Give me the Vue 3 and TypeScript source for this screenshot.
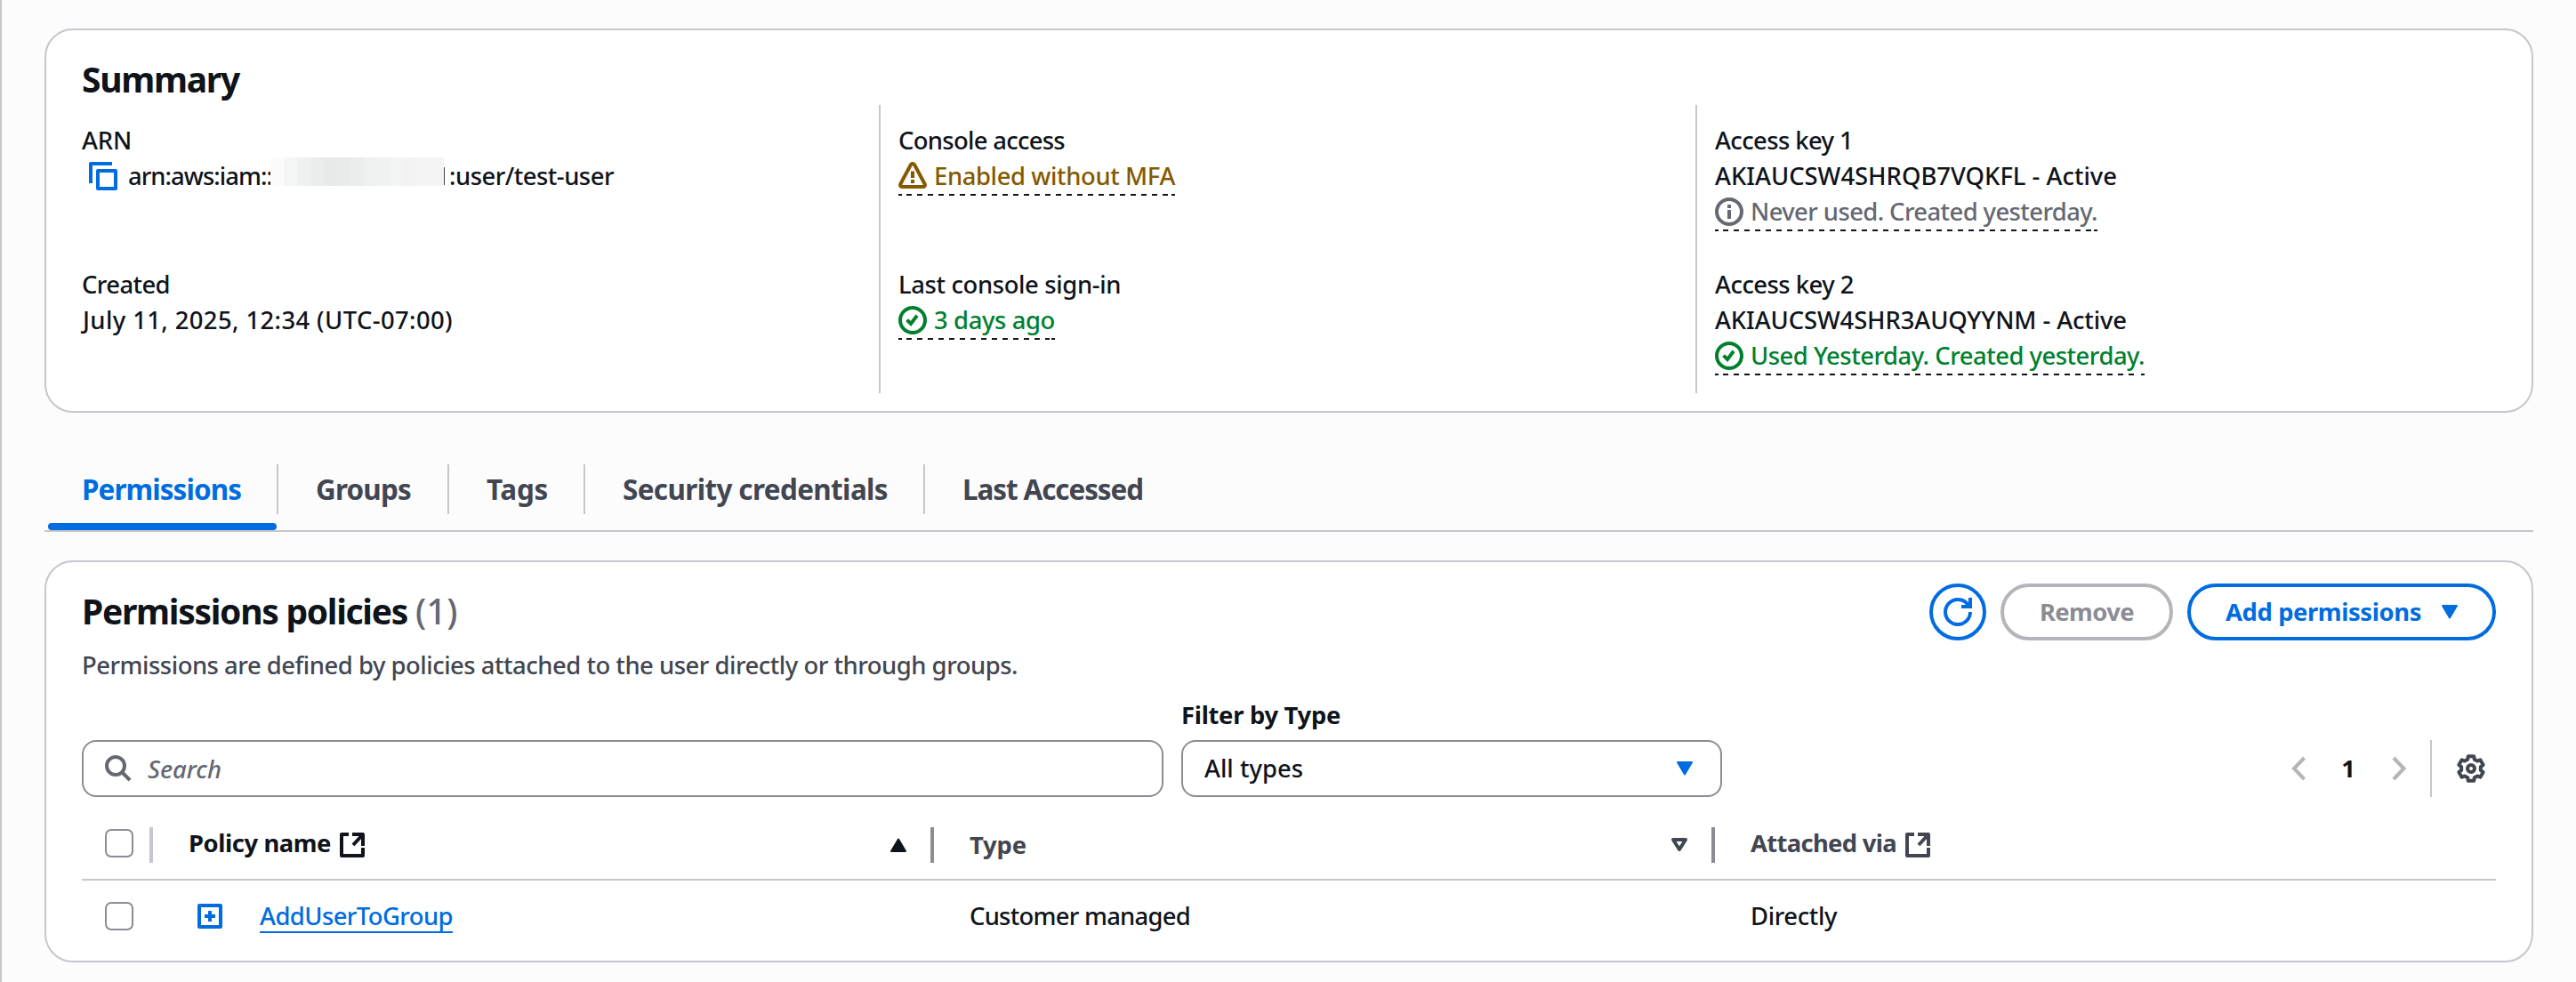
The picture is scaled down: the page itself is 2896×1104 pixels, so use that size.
<script setup lang="ts">
import type { Directive } from 'vue'

// Spreads a label over its intended width by adjusting the tracking.
const vFit: Directive<HTMLElement, number> = {
  mounted(el, { value }) {
    const count = (el.textContent ?? '').length
    const natural = el.getBoundingClientRect().width
    el.style.letterSpacing = `${(value - natural) / count}px`
  },
}

interface Tab { label: string; width: number; cell: number }

const tabs: Tab[] = [
  { label: 'Permissions', width: 179, cell: 263 },
  { label: 'Groups', width: 107, cell: 192 },
  { label: 'Tags', width: 69, cell: 153 },
  { label: 'Security credentials', width: 298, cell: 382 },
  { label: 'Last Accessed', width: 203, cell: 290 },
]

const mosaic = ['#fbfbfb', '#f5f6f6', '#eff0f0', '#ebecec', '#e8eaea', '#e9ebeb', '#ebecec', '#eff1f1', '#f0f2f2', '#f3f4f4', '#f3f3f3', '#f4f4f4', '#f4f4f4']
</script>

<template>
  <div class="page">
    <section class="card summary">
      <h2><span v-fit="177">Summary</span></h2>
      <div class="grid">
        <div class="col first">
          <div class="item">
            <div class="line"><span v-fit="56">ARN</span></div>
            <div class="line arn">
              <svg class="copy" width="32" height="32" viewBox="0 0 32 32" fill="none" stroke="#006ce0" stroke-width="4" stroke-linejoin="round"><rect x="10" y="10" width="20" height="20" /><path d="M2 24V2H26" /></svg>
              <span v-fit="162">arn:aws:iam::</span>
              <span class="redacted"><i v-for="(c, n) in mosaic" :key="n" :style="{ background: c }"></i></span>
              <span v-fit="185">:user/test-user</span>
            </div>
          </div>
          <div class="item">
            <div class="line"><span v-fit="99">Created</span></div>
            <div class="line july"><span v-fit="416">July 11, 2025, 12:34 (UTC-07:00)</span></div>
          </div>
        </div>
        <div class="col">
          <div class="item">
            <div class="line"><span v-fit="187">Console access</span></div>
            <div class="status warn">
              <svg width="32" height="32" viewBox="0 0 16 16" fill="none" stroke="currentColor" stroke-width="2"><path d="M1.150 12.500 6.950 1.650a1.200 1.200 0 0 1 2.100 0L14.850 12.500A1.030 1.030 0 0 1 14 14H2a1.030 1.030 0 0 1-.850-1.500ZM8 5.300V9M8 10v2" /></svg>
              <span v-fit="271">Enabled without MFA</span>
            </div>
          </div>
          <div class="item">
            <div class="line"><span v-fit="250">Last console sign-in</span></div>
            <div class="status ok">
              <svg width="32" height="32" viewBox="0 0 16 16" fill="none" stroke="currentColor" stroke-width="2"><circle cx="8" cy="8" r="7" /><path d="m4.800 7.800 2.200 2.200 3.500-4.600" /></svg>
              <span v-fit="136">3 days ago</span>
            </div>
          </div>
        </div>
        <div class="col">
          <div class="item">
            <div class="line"><span v-fit="155">Access key 1</span></div>
            <div class="line"><span v-fit="452">AKIAUCSW4SHRQB7VQKFL - Active</span></div>
            <div class="status muted">
              <svg width="32" height="32" viewBox="0 0 16 16" fill="none" stroke="currentColor" stroke-width="2"><circle cx="8" cy="8" r="7" /><path d="M8 4v2M8 7v5" /></svg>
              <span v-fit="390">Never used. Created yesterday.</span>
            </div>
          </div>
          <div class="item">
            <div class="line"><span v-fit="156">Access key 2</span></div>
            <div class="line"><span v-fit="463">AKIAUCSW4SHR3AUQYYNM - Active</span></div>
            <div class="status ok">
              <svg width="32" height="32" viewBox="0 0 16 16" fill="none" stroke="currentColor" stroke-width="2"><circle cx="8" cy="8" r="7" /><path d="m4.800 7.800 2.200 2.200 3.500-4.600" /></svg>
              <span v-fit="443">Used Yesterday. Created yesterday.</span>
            </div>
          </div>
        </div>
      </div>
    </section>

    <nav class="tabs">
      <a v-for="(t, n) in tabs" :key="t.label" class="tab" :class="{ active: n === 0 }" :style="{ width: t.cell + 'px' }"><span v-fit="t.width">{{ t.label }}</span></a>
    </nav>

    <section class="card policies">
      <header>
        <div class="titles">
          <h2><span v-fit="366">Permissions policies</span><span v-fit="48" class="count">(1)</span></h2>
          <p><span v-fit="1052">Permissions are defined by policies attached to the user directly or through groups.</span></p>
        </div>
        <div class="actions">
          <button class="btn round"><svg width="32" height="32" viewBox="0 0 16 16" fill="none" stroke="currentColor" stroke-width="2"><path d="M10 5h5V0M15 8a7 7 0 1 1-7-7c2.790 0 5.200 1.630 6.300 4" /></svg></button>
          <button class="btn remove"><span v-fit="106">Remove</span></button>
          <button class="btn add"><span v-fit="220">Add permissions</span><svg width="20" height="16" viewBox="0 0 20 16"><path d="M2 1H18L10 14.400Z" fill="currentColor" stroke="currentColor" stroke-width="2" stroke-linejoin="round" /></svg></button>
        </div>
      </header>

      <div class="filters">
        <div class="search">
          <svg width="30" height="30" viewBox="0 0 30 30" fill="none" stroke="#656871" stroke-width="4"><circle cx="12" cy="12" r="10" /><path d="m19 19 9 9" /></svg>
          <span v-fit="83">Search</span>
        </div>
        <div class="filter">
          <label><span v-fit="179">Filter by Type</span></label>
          <div class="select"><span v-fit="111">All types</span><svg width="20" height="16" viewBox="0 0 20 16"><path d="M2 1H18L10 14.400Z" fill="#006ce0" stroke="#006ce0" stroke-width="2" stroke-linejoin="round" /></svg></div>
        </div>
        <div class="pager">
          <svg width="16" height="28" viewBox="0 0 16 28" fill="none" stroke="#b4b4bb" stroke-width="4"><path d="M14.500 2 3 14l11.500 12" /></svg>
          <b>1</b>
          <svg width="16" height="28" viewBox="0 0 16 28" fill="none" stroke="#b4b4bb" stroke-width="4"><path d="M2 2 13.400 14 2 26" /></svg>
          <i class="bar"></i>
          <svg class="gear" width="32" height="32" viewBox="0 0 16 16" fill="none" stroke="#424650" stroke-width="2" stroke-linejoin="round"><path d="M6.400 1.080 9.600 1.080 9.880 2.830 11.540 3.790 13.190 3.160 14.790 5.920 13.420 7.050 13.420 8.950 14.790 10.080 13.190 12.840 11.540 12.210 9.880 13.170 9.600 14.920 6.400 14.920 6.120 13.170 4.460 12.210 2.810 12.840 1.210 10.080 2.580 8.950 2.580 7.050 1.210 5.920 2.810 3.160 4.460 3.790 6.120 2.830Z" /><circle cx="8" cy="8" r="2" /></svg>
        </div>
      </div>

      <div class="row head">
        <div class="c-check"><i class="box"></i><i class="sep"></i></div>
        <div class="c-name">
          <span v-fit="160">Policy name</span>
          <svg class="ext" width="28" height="28" viewBox="0 0 28 28" fill="none" stroke="currentColor" stroke-width="4" stroke-linejoin="round"><path d="M10 2H2V26H26V17M14 2H26V15M26 2 15 14" /></svg>
          <svg class="sort" width="20" height="16" viewBox="0 0 20 16"><path d="M2 15H18L10 1.600Z" fill="currentColor" stroke="currentColor" stroke-width="2" stroke-linejoin="round" /></svg>
          <i class="sep dark"></i>
        </div>
        <div class="c-type">
          <span v-fit="64" class="type">Type</span>
          <svg class="sort" width="20" height="16" viewBox="0 0 20 16"><path d="M3 2H17L10 13Z" fill="none" stroke="currentColor" stroke-width="4" stroke-linejoin="round" /></svg>
          <i class="sep dark"></i>
        </div>
        <div class="c-via">
          <span v-fit="164">Attached via</span>
          <svg class="ext" width="28" height="28" viewBox="0 0 28 28" fill="none" stroke="currentColor" stroke-width="4" stroke-linejoin="round"><path d="M10 2H2V26H26V17M14 2H26V15M26 2 15 14" /></svg>
        </div>
      </div>
      <div class="row body">
        <div class="c-check"><i class="box"></i></div>
        <div class="c-name">
          <svg class="plus" width="28" height="28" viewBox="0 0 28 28" fill="none" stroke="#006ce0" stroke-width="4" stroke-linejoin="round"><rect x="2" y="2" width="24" height="24" /><path d="M14 8V20M8 14H20" /></svg>
          <a><span v-fit="217">AddUserToGroup</span></a>
        </div>
        <div class="c-type"><span v-fit="248">Customer managed</span></div>
        <div class="c-via"><span v-fit="97">Directly</span></div>
      </div>
    </section>
  </div>
</template>

<style>
body { background: #fcfcfd; }
</style>

<style scoped>
.page {
  box-sizing: border-box;
  width: 2896px;
  height: 1104px;
  overflow: hidden;
  padding: 32px 48px 0;
  border-left: 2px solid #c6c6cd;
  background: #fcfcfd;
  color: #0f141a;
  font-family: "Noto Sans", "Open Sans", sans-serif;
  font-stretch: 92%;
  font-size: 27.4px;
  font-weight: 500;
  line-height: 40px;
  white-space: nowrap;
}
.page * { box-sizing: border-box; }
svg { display: block; flex: none; }
i { display: block; flex: none; }
.card {
  border: 2px solid #c6c6cd;
  border-radius: 32px;
  background: #fff;
}
.summary { height: 432px; padding: 30px 22px 0 18px; }
h2 { margin: 0; font-size: 39px; line-height: 50px; font-weight: 700; }
.summary h2 { padding-left: 22px; height: 54px; }
.grid { display: grid; grid-template-columns: repeat(3, 918px); height: 324px; }
.col { border-left: 2px solid #c6c6cd; padding: 20px 0 0 20px; }
.col.first { border-color: transparent; }
.item { height: 162px; }
.item:last-child { height: 142px; }
.july { padding-left: 1px; }
.arn { display: flex; height: 40px; padding-left: 8px; }
.copy { margin: 4px 12px 0 0; }
.redacted {
  display: flex;
  width: 198px;
  height: 32px;
  margin: -1px 3px 0 -2px;
  background: linear-gradient(#40454b, #40454b) 195px 11px / 1px 20px no-repeat;
}
.redacted i { width: 15px; height: 32px; }
.status {
  display: inline-flex;
  gap: 8px;
  height: 42px;
  vertical-align: top;
  background:
    linear-gradient(#0f141a, #0f141a) left bottom / 4px 2px no-repeat,
    linear-gradient(#0f141a, #0f141a) right bottom / 4px 2px no-repeat,
    repeating-linear-gradient(90deg, transparent 0 3px, #0f141a 3px 9px, transparent 9px 12px) 6px bottom / calc(100% - 12px) 2px no-repeat;
}
.status svg { margin-top: 4px; }
.warn { color: #855900; }
.ok { color: #00802f; }
.muted { color: #656871; }

.tabs { display: flex; align-items: flex-start; height: 82px; margin: 52px 0 32px; border-bottom: 2px solid #c6c6cd; }
.tab {
  position: relative;
  height: 80px;
  padding: 12px 0 0 42px;
  font-size: 31.4px;
  line-height: 44px;
  font-weight: 700;
  color: #424650;
}
.tab:not(:last-child)::after { content: ""; position: absolute; right: 0; top: 6px; width: 2px; height: 56px; background: #c6c6cd; }
.tab.active { color: #006ce0; }
.tab.active::before { content: ""; position: absolute; left: 4px; right: 2px; bottom: 0; height: 8px; border-radius: 4px; background: #006ce0; }

.policies { height: 452px; padding: 24px 40px 0; }
header { display: flex; justify-content: space-between; height: 130px; }
.titles h2 { padding-top: 6px; height: 62px; }
.count { margin-left: 9px; font-weight: 500; color: #656871; }
p { margin: 10px 0 0; color: #424650; }
.actions { display: flex; gap: 16px; align-items: flex-start; }
.btn {
  display: flex;
  align-items: center;
  justify-content: center;
  height: 64px;
  padding: 0;
  border: 4px solid #006ce0;
  border-radius: 32px;
  background: #fff;
  color: #006ce0;
  font: inherit;
  font-stretch: inherit;
  font-weight: 700;
}
.round { width: 64px; }
.remove { width: 194px; border-color: #b4b4bb; color: #8c8c94; }
.add { width: 347px; gap: 22px; padding-left: 1px; }

.filters { display: flex; align-items: flex-end; height: 110px; }
.search {
  display: flex;
  align-items: center;
  gap: 18px;
  width: 1216px;
  height: 64px;
  padding-left: 24px;
  border: 2px solid #8c8c94;
  border-radius: 16px;
  color: #656871;
  font-style: italic;
}
.search span { padding-top: 1px; }
.filter { margin-left: 20px; width: 608px; }
label { display: block; font-weight: 700; height: 48px; }
.select {
  display: flex;
  align-items: center;
  justify-content: space-between;
  height: 64px;
  padding: 0 30px 0 24px;
  border: 2px solid #8c8c94;
  border-radius: 16px;
}
.pager { display: flex; align-items: center; height: 64px; margin-left: auto; padding-right: 12px; }
.pager b { width: 16px; margin: 0 41px 0 40px; text-align: center; font-weight: 700; }
.bar { width: 2px; height: 64px; margin: 0 28px 0 27px; background: #c6c6cd; }

.row { display: grid; grid-template-columns: 80px 878px 878px 878px; }
.row > div { display: flex; align-items: flex-start; }
.head { height: 94px; border-bottom: 2px solid #c6c6cd; color: #424650; font-weight: 700; padding-top: 34px; }
.box { width: 32px; height: 32px; margin: 2px 0 0 26px; border: 2px solid #8c8c94; border-radius: 7px; }
.sep { width: 4px; height: 40px; margin: 0 0 0 auto; background: #c6c6cd; }
.dark { margin-left: 26px; background: #8c8c94; }
.head .c-name { padding-left: 40px; color: #0f141a; }
.head span { margin-top: -2px; }
.head span.type { margin-top: 0; }
.ext { margin: 6px 0 0 10px; }
.sort { margin: 12px 0 0 auto; }
.c-type { padding-left: 40px; }
.c-via { padding-left: 40px; }
.body { padding-top: 20px; }
.body .box { margin-top: 4px; }
.plus { margin: 6px 42px 0 50px; }
.body a { height: 39px; border-bottom: 2px solid #006ce0; color: #006ce0; }
</style>
